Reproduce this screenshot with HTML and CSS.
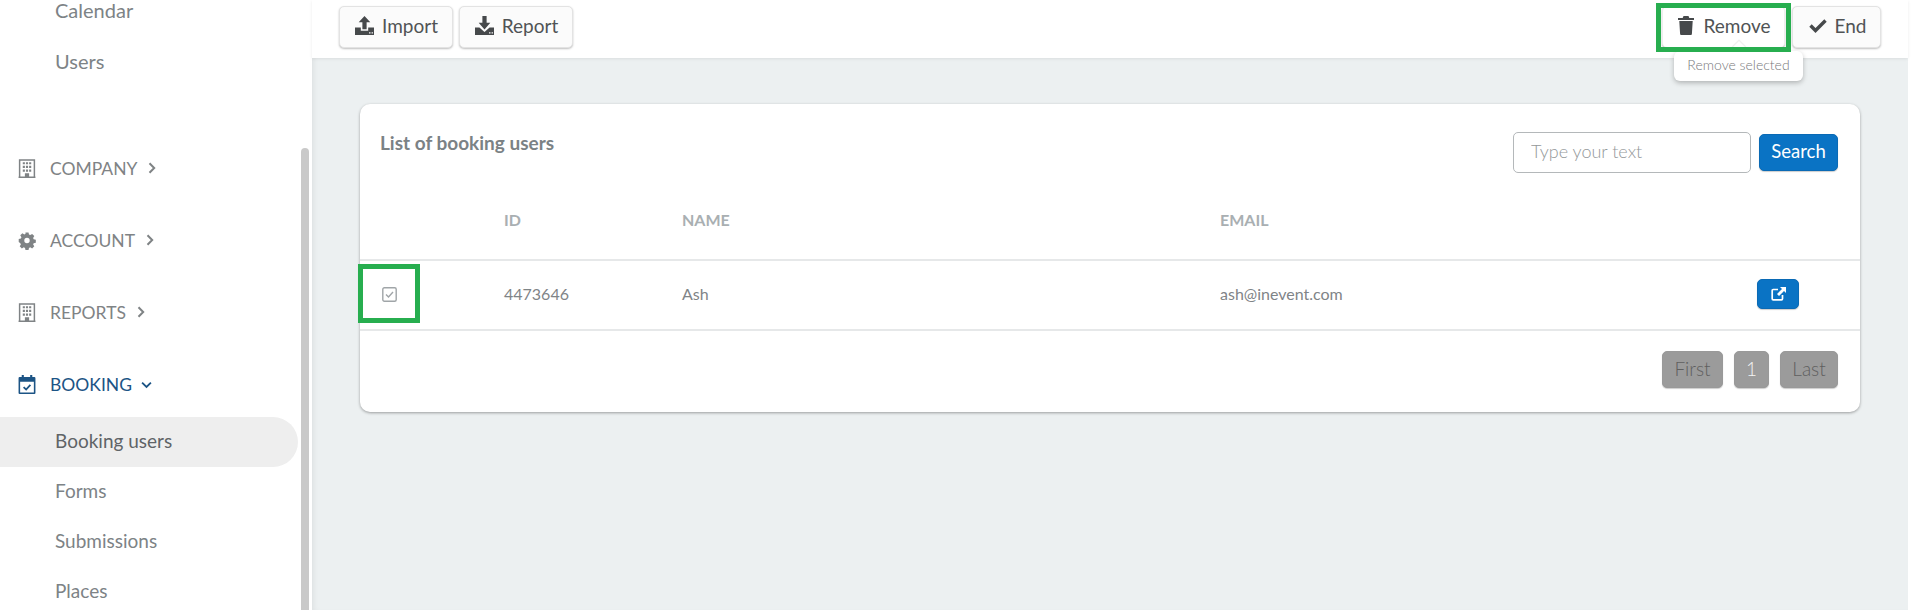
FILE: index.html
```html
<!DOCTYPE html>
<html lang="en">
<head>
<meta charset="utf-8">
<title>Booking users</title>
<link rel="stylesheet" href="styles.css">
</head>
<body>
<div class="app">
  <aside class="sidebar">
    <nav class="nav">
      <a class="sub big top">Calendar</a>
      <a class="sub big">Users</a>
      <a class="section first">
        <svg class="ico" viewBox="0 0 16 18"><path d="M1 17V1h14v16M0 17.200h16" fill="none" stroke="currentColor" stroke-width="1.400"/><path d="M4 3h2v2H4zM7 3h2v2H7zM10 3h2v2h-2zM4 6.500h2v2H4zM7 6.500h2v2H7zM10 6.500h2v2h-2zM4 10h2v2H4zM7 10h2v2H7zM10 10h2v2h-2zM6 13.500h4V17H6z" fill="currentColor"/></svg>
        <span>COMPANY</span><svg class="chev" viewBox="0 0 8 12"><path d="M1.500 1.200 6.200 6l-4.700 4.800" fill="none" stroke="currentColor" stroke-width="2"/></svg>
      </a>
      <a class="section">
        <svg class="ico" viewBox="0 0 18 18"><path fill-rule="evenodd" d="M7.300 0h3.400l.5 2.400 1.400.6 2.100-1.300 2.400 2.400-1.300 2.100.6 1.400 2.400.5v3.400l-2.400.5-.6 1.400 1.300 2.100-2.400 2.400-2.100-1.300-1.400.6-.5 2.400H7.300l-.5-2.400-1.400-.6-2.100 1.300-2.400-2.400 1.300-2.100-.6-1.400L-.2 10.700V7.300l2.400-.5.6-1.400L1.500 3.300l2.400-2.400L6 2.200l1.400-.6zM9 6a3 3 0 1 0 0 6 3 3 0 0 0 0-6z" transform="translate(.9 .9) scale(.9)" fill="currentColor"/></svg>
        <span>ACCOUNT</span><svg class="chev" viewBox="0 0 8 12"><path d="M1.500 1.200 6.200 6l-4.700 4.800" fill="none" stroke="currentColor" stroke-width="2"/></svg>
      </a>
      <a class="section">
        <svg class="ico" viewBox="0 0 16 18"><path d="M1 17V1h14v16M0 17.200h16" fill="none" stroke="currentColor" stroke-width="1.400"/><path d="M4 3h2v2H4zM7 3h2v2H7zM10 3h2v2h-2zM4 6.500h2v2H4zM7 6.500h2v2H7zM10 6.500h2v2h-2zM4 10h2v2H4zM7 10h2v2H7zM10 10h2v2h-2zM6 13.500h4V17H6z" fill="currentColor"/></svg>
        <span>REPORTS</span><svg class="chev" viewBox="0 0 8 12"><path d="M1.500 1.200 6.200 6l-4.700 4.800" fill="none" stroke="currentColor" stroke-width="2"/></svg>
      </a>
      <a class="section open">
        <svg class="ico" viewBox="0 0 16 18"><path fill-rule="evenodd" d="M3 0h2v2h6V0h2v2h2a1 1 0 0 1 1 1v14a1 1 0 0 1-1 1H1a1 1 0 0 1-1-1V3a1 1 0 0 1 1-1h2zM1.500 6.500v10h13v-10z" fill="currentColor"/><path d="m4.800 11.400 2.400 2.400 4-4.400" fill="none" stroke="currentColor" stroke-width="1.700"/></svg>
        <span>BOOKING</span><svg class="chev down" viewBox="0 0 12 8"><path d="M1.200 1.500 6 6.200l4.800-4.700" fill="none" stroke="currentColor" stroke-width="2"/></svg>
      </a>
      <a class="sub active">Booking users</a>
      <a class="sub">Forms</a>
      <a class="sub">Submissions</a>
      <a class="sub">Places</a>
    </nav>
    <div class="scrollbar"></div>
  </aside>

  <div class="main">
    <header class="topbar">
      <div class="group">
        <button class="btn">
          <svg class="btn-ico" viewBox="0 0 18 18"><path d="M9 0l5.500 6H11v6.500H7V6H3.500z" fill="currentColor"/><path fill-rule="evenodd" d="M0 11h5.500v3h7v-3H18v7H0zM13.300 15.500h1.400v1h-1.400zM15.700 15.500h1.300v1h-1.300z" fill="currentColor"/></svg>
          Import
        </button>
        <button class="btn">
          <svg class="btn-ico" viewBox="0 0 18 18"><path d="M7 0h4v6.500h3.500L9 12.800 3.500 6.500H7z" fill="currentColor"/><path fill-rule="evenodd" d="M0 11h4.200L9 15.200l4.800-4.200H18v7H0zM13.300 15.500h1.400v1h-1.400zM15.700 15.500h1.300v1h-1.300z" fill="currentColor"/></svg>
          Report
        </button>
      </div>
      <div class="group">
        <button class="btn remove">
          <svg class="trash" viewBox="0 0 16 19"><path d="M5.500 0h5l.8 2H16v2H0V2h4.700zM1.300 5h13.400l-.8 13a1 1 0 0 1-1 1H3.100a1 1 0 0 1-1-1z" fill="currentColor"/></svg>
          Remove
          <span class="tooltip">Remove selected</span>
        </button>
        <button class="btn end">
          <svg class="check" viewBox="0 0 18 14"><path d="M1.500 7 6.500 12 16.500 2" fill="none" stroke="currentColor" stroke-width="3.400"/></svg>
          End
        </button>
      </div>
    </header>

    <section class="card">
      <div class="card-head">
        <h2 class="title">List of booking users</h2>
        <div class="search">
          <input class="input" type="text" placeholder="Type your text">
          <button class="primary search-btn">Search</button>
        </div>
      </div>
      <div class="row head">
        <span></span><span>ID</span><span>NAME</span><span>EMAIL</span><span></span>
      </div>
      <div class="row body">
        <span class="select">
          <svg class="tick" viewBox="0 0 15 15"><rect x=".8" y=".8" width="13.400" height="13.400" rx="1.500" fill="none" stroke="currentColor" stroke-width="1.400"/><path d="m4 7.500 2.500 2.500L11 5" fill="none" stroke="currentColor" stroke-width="1.400"/></svg>
        </span>
        <span>4473646</span><span>Ash</span><span>ash@inevent.com</span>
        <span class="action">
          <button class="primary edit">
            <svg class="edit-ico" viewBox="0 0 15 14"><path d="M7 2.500H2.200a1 1 0 0 0-1 1v8.300a1 1 0 0 0 1 1h8.300a1 1 0 0 0 1-1V8" fill="none" stroke="currentColor" stroke-width="1.700"/><path d="M9 0h6v6l-2-2-5 5-2-2 5-5z" fill="currentColor"/></svg>
          </button>
        </span>
      </div>
      <div class="pager">
        <button class="page muted first-page">First</button>
        <button class="page">1</button>
        <button class="page muted last-page">Last</button>
      </div>
    </section>
  </div>
</div>
</body>
</html>
```
FILE: styles.css
```css
*, *::before, *::after { box-sizing: border-box; }
html, body { margin: 0; height: 100%; overflow: hidden; background: #fff; }
body { font-family: Lato, "Open Sans", sans-serif; color: #6f7375; }
button { font-family: inherit; cursor: pointer; }

.app { display: flex; height: 610px; width: 1908px; }

/* Sidebar */
.sidebar { width: 312px; flex: none; display: flex; background: #fff; overflow: hidden; }
.nav { width: 301px; flex: none; display: flex; flex-direction: column; }
.sub { height: 50px; flex: none; display: flex; align-items: center; padding: 0 0 2px 55px; font-size: 19px; line-height: 20px; color: #7d8386; border-radius: 0 25px 25px 0; margin-right: 3px; }
.sub.big { font-size: 20px; }
.sub.top { height: 22px; margin-bottom: 14px; }
.sub + .sub { margin-top: 1px; }
.sub.active, .sub.active ~ .sub { margin-top: 0; }
.sub.active { background: #eeeeee; color: #5f6467; }
.section { height: 72px; flex: none; display: flex; align-items: center; padding-left: 18px; font-size: 17.500px; color: #7f8385; }
.section.first { margin-top: 45px; }
.section.open { color: #1c5485; height: 69px; padding-top: 4px; }
.ico { width: 18px; height: 19px; flex: none; margin-right: 14px; }
.chev { width: 8px; height: 12px; margin-left: 11px; }
.chev.down { width: 11px; height: 8px; margin-left: 9px; }
.scrollbar { width: 8px; margin-top: 148px; flex: none; background: #c9c9c9; border-radius: 4px 4px 0 0; }

/* Main */
.main { flex: 1; min-width: 0; display: flex; flex-direction: column; background: #ecf0f1; box-shadow: inset 5px 0 6px -4px rgba(0,0,0,.08); }
.topbar { height: 58px; flex: none; background: #fff; display: flex; justify-content: space-between; padding: 6px 27px 0; box-shadow: 0 1px 3px rgba(0,0,0,.08); }
.group { display: flex; gap: 6px; height: 42px; }
.group:last-child { gap: 7px; }
.btn { position: relative; display: flex; align-items: center; justify-content: center; height: 42px; width: 114px; padding: 0 0 3px 1px; background: #fbfbfb; border: 1px solid #e3e3e3; border-radius: 5px; box-shadow: 0 1px 2px rgba(0,0,0,.25); font-size: 19px; color: #505355; }
.btn-ico { width: 19px; height: 19px; margin-right: 8px; color: #46494b; margin-top: -1px; }
.remove { width: 123px; padding-left: 2px; background: #fff; border-color: #eee; }
.remove::after { content: ""; position: absolute; left: -7px; top: -4px; width: 135px; height: 49px; border: 5px solid #27ae4f; z-index: 4; pointer-events: none; }
.end { width: 89px; padding-left: 2px; }
.trash { width: 16px; height: 19px; margin-right: 9px; color: #46494b; }
.check { width: 18px; height: 15px; margin-right: 8px; color: #46494b; }
.tooltip { position: absolute; left: 11px; top: 44px; width: 129px; height: 30px; padding-bottom: 3px; display: flex; align-items: center; justify-content: center; background: #fff; border-radius: 6px; box-shadow: 0 2px 5px rgba(0,0,0,.25); font-size: 14px; font-weight: 300; color: #77797b; white-space: nowrap; z-index: 3; }
.tooltip::before { content: ""; position: absolute; left: 60px; top: -8px; width: 10px; height: 10px; background: #fff; box-shadow: -1px -1px 1px rgba(0,0,0,.08); transform: rotate(45deg); }

/* Card */
.card { margin: 46px 48px 0 48px; height: 308px; flex: none; background: #fff; border-radius: 10px; box-shadow: 0 1px 3px rgba(0,0,0,.35); display: flex; flex-direction: column; }
.card-head { height: 86px; flex: none; display: flex; justify-content: space-between; padding: 28px 22px 0 20px; }
.title { margin: 0; font-size: 19px; font-weight: 700; color: #7b8285; line-height: 22px; }
.search { display: flex; align-items: center; gap: 8px; height: 41px; }
.input { width: 238px; height: 41px; padding: 0 17px 3px; border: 1px solid #b4b8ba; border-radius: 5px; background: #fff; font-family: inherit; font-size: 18px; font-weight: 300; outline: none; }
.input::placeholder { color: #94989a; opacity: 1; }
.primary { background: #0a73c4; border: 1px solid #0a6ab5; color: #fff; border-radius: 5px; box-shadow: 0 1px 1px rgba(0,0,0,.2); padding: 0; }
.search-btn { width: 79px; height: 37px; padding-bottom: 3px; font-size: 18.500px; font-weight: 400; }

.row { display: grid; grid-template-columns: 144px 178px 538px 537px 102px; align-items: center; }
.row.head { height: 71px; padding-bottom: 10px; border-bottom: 2px solid #e6e8e9; font-size: 16px; font-weight: 700; color: #a9afb2; }
.row.body { height: 70px; padding-bottom: 4px; border-bottom: 2px solid #e6e8e9; font-size: 16px; color: #7f8487; }
.select { position: relative; display: flex; margin-top: 2px; padding-left: 22px; align-items: center; }
.select::after { content: ""; position: absolute; left: -2px; top: -23px; width: 62px; height: 59px; border: 5px solid #27ae4f; }
.tick { width: 15px; height: 15px; color: #a0a5a8; }
.action { margin-top: 2px; }
.edit { width: 42px; height: 30px; display: flex; align-items: center; justify-content: center; }
.edit-ico { width: 15px; height: 14px; }

.pager { display: flex; justify-content: flex-end; gap: 11px; padding: 20px 22px 0 0; }
.page { height: 37px; width: 35px; padding: 0 0 2px; border: 1px solid #999; border-radius: 5px; background: #9b9b9b; box-shadow: 0 1px 1px rgba(0,0,0,.2); font-family: inherit; font-size: 19px; font-weight: 300; color: #f4f4f4; }
.page.muted { color: #5f5f5f; }
.first-page { width: 61px; }
.last-page { width: 58px; }
```
